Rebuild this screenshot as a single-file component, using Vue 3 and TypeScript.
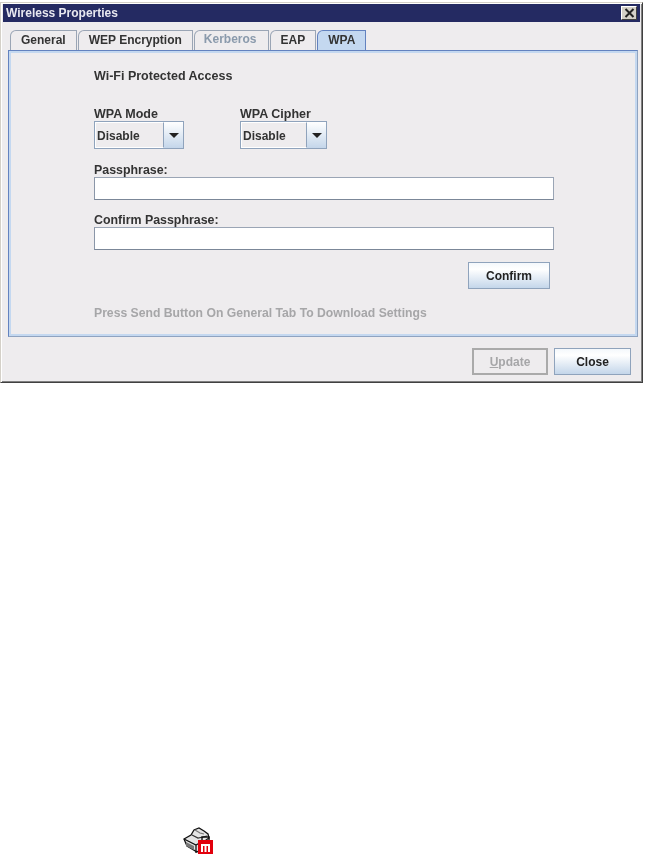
<script setup lang="ts">
interface Tab {
  label: string;
  state?: "active" | "disabled";
}

const tabs: Tab[] = [
  { label: "General" },
  { label: "WEP Encryption" },
  { label: "Kerberos", state: "disabled" },
  { label: "EAP" },
  { label: "WPA", state: "active" },
];

const combos = [
  { label: "WPA Mode", value: "Disable", width: 90 },
  { label: "WPA Cipher", value: "Disable", width: 87 },
];
</script>

<template>
  <div class="page">
    <div class="window">
      <div class="titlebar">
        <span>Wireless Properties</span>
        <button class="close-x" aria-label="Close">
          <svg width="11" height="10" viewBox="0 0 11 10">
            <path d="M1.5 1 9.5 9M9.5 1 1.5 9" stroke="#222" stroke-width="2" fill="none" />
          </svg>
        </button>
      </div>
      <div class="body">
        <div class="tabs">
          <div v-for="tab in tabs" :key="tab.label" class="tab" :class="tab.state">{{ tab.label }}</div>
        </div>
        <div class="panel">
          <div class="heading">Wi-Fi Protected Access</div>
          <div class="combos">
            <div v-for="c in combos" :key="c.label" class="combo-field">
              <label>{{ c.label }}</label>
              <div class="combo" :style="{ width: c.width + 'px' }">
                <span class="combo-value">{{ c.value }}</span>
                <span class="combo-arrow"><i></i></span>
              </div>
            </div>
          </div>
          <label class="pass-label">Passphrase:</label>
          <div class="input"></div>
          <label class="pass-label second">Confirm Passphrase:</label>
          <div class="input"></div>
          <div class="confirm-row">
            <button class="btn confirm">Confirm</button>
          </div>
          <div class="hint">Press Send Button On General Tab To Download Settings</div>
        </div>
        <div class="footer">
          <button class="btn update"><u>U</u>pdate</button>
          <button class="btn close">Close</button>
        </div>
      </div>
    </div>
    <div class="tray">
      <svg width="31" height="27" viewBox="0 0 31 27">
        <path d="M1 12 8 8l3-5 5-2 5 3 4 3 1 4-3 2v6l-9 6-10-6z" fill="#e4e4e4" stroke="#111" stroke-width="1.3" />
        <path d="M9 8l6 3 5-1 4-1" fill="none" stroke="#333" stroke-width="1.2" />
        <path d="M12 3l5 3 4 1" fill="none" stroke="#777" stroke-width="1.2" />
        <path d="M1 12l12 6 7-4M13 18v8" fill="none" stroke="#111" stroke-width="1.3" />
        <path d="M3 15l8 4v4l-8-4z" fill="#777" />
        <path d="M19 13v-3h7v3" fill="none" stroke="#111" stroke-width="1.4" />
        <rect x="15" y="13" width="15" height="14" fill="#e2000c" />
        <path d="M18 17h9v8h-2v-6h-1.5v6h-2v-6H20v6h-2z" fill="#fff" />
      </svg>
    </div>
  </div>
</template>

<style scoped>
.page {
  width: 646px;
  height: 854px;
  background: #fff;
  overflow: hidden;
  padding-top: 2px;
  box-sizing: border-box;
  font-family: "Liberation Sans", Arial, sans-serif;
  font-size: 12px;
  font-weight: 700;
  color: #333;
}
.window {
  width: 643px;
  height: 381px;
  box-sizing: border-box;
  background: #eeecee;
  border: 1px solid;
  border-color: #d4d0c8 #404040 #404040 #d4d0c8;
  padding: 1px 2px 1px 2px;
  box-shadow: inset 1px 1px 0 #fff, inset -1px -1px 0 #808080;
  display: flex;
  flex-direction: column;
  filter: blur(0.3px);
}
.titlebar {
  height: 18px;
  flex: none;
  background: #242a62;
  color: #e8e8f0;
  display: flex;
  align-items: center;
  justify-content: space-between;
  padding: 0 3px 0 3px;
  font-size: 12px;
}
.close-x {
  width: 16px;
  height: 14px;
  padding: 0;
  border: 1px solid;
  border-color: #fff #404040 #404040 #fff;
  background: #d4d0c8;
  display: flex;
  align-items: center;
  justify-content: center;
}
.body {
  flex: 1;
  padding: 8px 2px 0 5px;
  display: flex;
  flex-direction: column;
}
.tabs {
  display: flex;
  padding-left: 2px;
  height: 20px;
  flex: none;
}
.tab {
  height: 20px;
  box-sizing: border-box;
  border: 1px solid #9aa5b5;
  border-bottom: none;
  border-radius: 6px 0 0 0;
  padding: 0 10px;
  line-height: 19px;
  margin-right: 1px;
  color: #333;
}
.tab.disabled {
  color: #8a9aac;
  padding: 0 11px 0 9px;
  line-height: 17px;
}
.tab.active {
  background: #c4d8f0;
  border-color: #6382bf;
}
.panel {
  height: 287px;
  box-sizing: border-box;
  width: 630px;
  border: 1px solid #6382bf;
  border-color: #6382bf #8fa3c0 #8fa3c0 #6382bf;
  box-shadow: inset 0 0 0 2px #c4d8f0;
  padding: 18px 0 0 85px;
  display: flex;
  flex-direction: column;
  align-items: flex-start;
}
.heading {
  height: 15px;
  line-height: 15px;
  font-size: 12.5px;
}
.combos {
  display: flex;
  gap: 56px;
  margin-top: 23px;
}
.combo-field label {
  display: block;
  height: 14px;
  line-height: 14px;
  font-size: 12.5px;
}
.combo {
  height: 28px;
  box-sizing: border-box;
  display: flex;
  border: 1px solid #8fa3bc;
  background: #eeecee;
}
.combo-value {
  flex: 1;
  padding-left: 1px;
  line-height: 26px;
  border: 1px solid #fff;
  border-right: 1px solid #8fa3bc;
  background: #eeecee;
}
.combo-arrow {
  width: 19px;
  background: linear-gradient(#fff, #c4d6ea);
  display: flex;
  align-items: center;
  justify-content: center;
}
.combo-arrow i {
  width: 0;
  height: 0;
  border: 5px solid transparent;
  border-top: 5px solid #222;
  border-bottom: none;
}
.pass-label {
  display: block;
  height: 14px;
  line-height: 14px;
  margin-top: 14px;
  font-size: 12.4px;
}
.pass-label.second {
  margin-top: 13px;
}
.input {
  width: 460px;
  height: 23px;
  box-sizing: border-box;
  background: #fff;
  border: 1px solid #9aa5b5;
  border-left-color: #8a96a8;
  border-bottom-color: #7b8798;
}
.confirm-row {
  width: 456px;
  display: flex;
  justify-content: flex-end;
  margin-top: 12px;
}
.btn {
  font: inherit;
  color: #222;
  height: 27px;
  padding: 0;
  box-sizing: border-box;
  border: 1px solid #8fa3bc;
  background: linear-gradient(#f4f8fc, #fff 25%, #c4d6ea);
}
.btn.confirm {
  width: 82px;
}
.hint {
  margin-top: 17px;
  color: #a6a6a8;
  height: 14px;
  line-height: 14px;
  font-size: 12.2px;
}
.footer {
  display: flex;
  justify-content: flex-end;
  gap: 6px;
  padding-right: 7px;
  margin-top: 11px;
}
.btn.update {
  width: 76px;
  background: #eeecee;
  border: 2px solid #aaa;
  color: #a6a6a8;
}
.btn.close {
  width: 77px;
}
.tray {
  margin-top: 444px;
  padding-left: 183px;
  height: 27px;
}
.tray svg {
  display: block;
}
</style>
